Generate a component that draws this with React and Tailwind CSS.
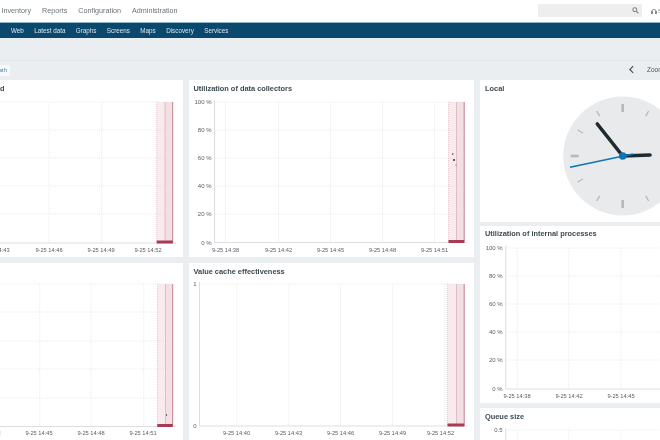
const sans = "font-['Liberation_Sans',Arial,sans-serif]";

function Chart({ w, h, axisX, top, bottom, vs, hs, xLabels, yLabels, band, dots = [], labelY = 156, axis = true }) {
  const end = band ? band[1] : w;
  return (
    <svg width={w} height={h} className="block" fontFamily="'Liberation Sans', Arial, sans-serif">
      {band && (
        <g>
          <rect x={band[0]} y={top} width={band[2] - band[0]} height={bottom - top} fill="#f9eaed" />
          <rect x={band[2]} y={top} width={band[1] - band[2]} height={bottom - top} fill="#f4dfe3" />
        </g>
      )}
      {hs.map((y) => (
        <line key={y} x1={axisX} x2={end} y1={y} y2={y} stroke="#dee1e3" strokeWidth="0.7" strokeDasharray="1 1" />
      ))}
      {vs.map((x) => (
        <line key={x} x1={x} x2={x} y1={top} y2={bottom} stroke="#dee1e3" strokeWidth="0.7" strokeDasharray="1 1" />
      ))}
      {axis && <line x1={axisX} x2={axisX} y1={top - 2} y2={bottom} stroke="#d3d6d9" strokeWidth="0.8" />}
      <line x1={axisX} x2={band ? band[1] + 3 : w} y1={bottom} y2={bottom} stroke="#d3d6d9" strokeWidth="0.8" />
      {band && (
        <g>
          <line x1={band[0]} x2={band[0]} y1={top} y2={bottom} stroke="#d9b6bd" strokeWidth="0.7" strokeDasharray="1 1" />
          <line x1={band[2]} x2={band[2]} y1={top} y2={bottom} stroke="#d8b4bc" strokeWidth="0.8" />
          <line x1={band[1]} x2={band[1]} y1={top} y2={bottom} stroke="#c2808d" strokeWidth="1" />
          <rect x={band[0]} y={bottom - 2.5} width={band[1] - band[0]} height={3} fill="#a83a52" />
        </g>
      )}
      {dots.map(([x, y, r], i) => (
        <circle key={i} cx={x} cy={y} r={r} fill="#3a2a2e" />
      ))}
      {yLabels.map(([t, y]) => (
        <text key={t} x={axisX - 3} y={y + 2} textAnchor="end" fontSize="6" fill="#5a6166">{t}</text>
      ))}
      {xLabels.map(([t, x]) => (
        <text key={t} x={x} y={labelY} textAnchor="middle" fontSize="5.7" fill="#5a6166">{t}</text>
      ))}
    </svg>
  );
}

function Clock() {
  const cx = 142.7, cy = 76;
  const ticks = [];
  for (let i = 0; i < 12; i++) {
    const a = (i * 30 * Math.PI) / 180;
    const major = i % 3 === 0;
    const r1 = major ? 44 : 46;
    const r2 = 52;
    ticks.push(
      <line key={i} x1={cx + Math.sin(a) * r1} y1={cy - Math.cos(a) * r1} x2={cx + Math.sin(a) * r2} y2={cy - Math.cos(a) * r2}
        stroke="#b4b9bc" strokeWidth={major ? 2.6 : 1.3} />
    );
  }
  return (
    <svg width="180" height="142" className="block">
      <circle cx={cx} cy={cy} r="59.5" fill="#e9eaeb" />
      {ticks}
      <line x1={cx} y1={cy} x2="117.3" y2="44" stroke="#1f2a30" strokeWidth="3.6" strokeLinecap="round" />
      <line x1={cx} y1={cy} x2="170" y2="75" stroke="#1f2a30" strokeWidth="3.6" strokeLinecap="round" />
      <line x1="90" y1="87.3" x2="153" y2="74" stroke="#0f74b5" strokeWidth="1.6" />
      <circle cx={cx} cy={cy} r="3.8" fill="#0f74b5" />
    </svg>
  );
}

function Card({ title, height, children, className = "", titleClass = "pl-[5px]" }) {
  return (
    <div className={`bg-white overflow-hidden shrink-0 ${className}`} style={{ height }}>
      <div className={`h-[16px] pt-[3.5px] text-[7.4px] leading-[10px] font-bold text-[#3b4a52] whitespace-nowrap ${titleClass}`}>{title}</div>
      {children}
    </div>
  );
}

const pct = (t) => [["100 %", t], ["80 %", t + 28], ["60 %", t + 56], ["40 %", t + 84], ["20 %", t + 112], ["0 %", t + 141]];

export default function App() {
  return (
    <div className={`w-[660px] h-[440px] overflow-hidden bg-[#ebeef0] blur-[0.35px] ${sans}`}>
      <header className="h-[23px] bg-white flex items-center border-b border-[#8fb6c8]">
        <nav className="flex gap-[11px] pl-[1.5px] text-[7.2px] text-[#6b7478] flex-1">
          <span>Inventory</span><span>Reports</span><span>Configuration</span><span>Administration</span>
        </nav>
        <div className="w-[104px] h-[13px] bg-[#eeeeee] flex items-center justify-end pr-[3px] mb-[1px]">
          <svg width="7" height="7" viewBox="0 0 10 10" fill="none" stroke="#7d8589" strokeWidth="1.5">
            <circle cx="4" cy="4" r="2.8" /><line x1="6" y1="6" x2="9.2" y2="9.2" />
          </svg>
        </div>
        <div className="w-[18px] pl-[9px] flex items-center gap-[1px] shrink-0 text-[6px] text-[#7d8589]">
          <svg width="6" height="7" viewBox="0 0 10 10" fill="none" stroke="#5f6a70" strokeWidth="1.2" className="shrink-0">
            <path d="M1.5 7V5a3.5 3.5 0 0 1 7 0v2" /><rect x="0.8" y="5.5" width="1.6" height="3" fill="#5f6a70" /><rect x="7.6" y="5.5" width="1.6" height="3" fill="#5f6a70" />
          </svg>
          <span>S</span>
        </div>
      </header>
      <div className="h-[15px] bg-[#0b486d] flex items-center gap-[10.4px] pl-[11px] text-[6.3px] text-[#d7e5ee]">
        <span>Web</span><span>Latest data</span><span>Graphs</span><span>Screens</span><span>Maps</span><span>Discovery</span><span>Services</span>
      </div>
      <div className="h-[23px] border-b border-[#e5e8ea]" />
      <div className="h-[19px] flex items-start justify-between">
        <div className="mt-[4px] h-[11px] w-[10px] pr-[3px] rounded-r-[1px] bg-[#f7f9fa] text-[6px] leading-[11px] text-[#3f8ab4] flex justify-end overflow-hidden">ath</div>
        <div className="flex items-center mt-[4px]">
          <svg width="5" height="9" viewBox="0 0 6 10" fill="none" stroke="#4c565b" strokeWidth="1.5" className="mr-[13.5px]"><path d="M5 1 1 5l4 4" /></svg>
          <span className="text-[6.5px] text-[#4c565b] w-[13px] overflow-hidden">Zoom</span>
        </div>
      </div>
      <div className="flex">
        <div className="w-[183px] shrink-0 flex flex-col gap-[6px]">
          <Card title="d" height={177} titleClass="pl-0">
            <Chart w={183} h={161} axisX={-5} top={6} bottom={147} axis={false}
              vs={[49, 101.7]} hs={[6, 34, 62, 90, 118]} band={[156.7, 172.7, 165]}
              yLabels={[]} xLabels={[["9-25 14:43", -4], ["9-25 14:46", 49], ["9-25 14:49", 101], ["9-25 14:52", 148]]} />
          </Card>
          <Card title="" height={177}>
            <Chart w={183} h={161} axisX={-5} top={5} bottom={147.5} axis={false}
              vs={[39.7, 91, 143.7]} hs={[5, 33, 62, 90, 119]} band={[157.3, 172.7, 165.5]}
              dots={[[166.5, 136, 0.7]]} yLabels={[]}
              xLabels={[["9-25 14:42", -13], ["9-25 14:45", 39], ["9-25 14:48", 91], ["9-25 14:51", 143]]} />
          </Card>
        </div>
        <div className="w-[285.5px] ml-[5.5px] shrink-0 flex flex-col gap-[6px]">
          <Card title="Utilization of data collectors" height={177}>
            <Chart w={285.5} h={161} axisX={25.5} top={6} bottom={146.5} vs={[36.5, 89.5, 141.5, 193.5, 245.5]}
              hs={[6, 34, 62, 90, 118]} band={[259.5, 275.2, 267.5]} yLabels={pct(5.5)}
              dots={[[263.8, 58, 0.8], [265, 64, 1], [267, 69, 0.5]]}
              xLabels={[["9-25 14:38", 36.5], ["9-25 14:42", 89.5], ["9-25 14:45", 141.5], ["9-25 14:48", 193.5], ["9-25 14:51", 245.5]]} />
          </Card>
          <Card title="Value cache effectiveness" height={177}>
            <Chart w={285.5} h={161} axisX={10.5} top={5} bottom={147} vs={[47.8, 99.8, 151.5, 203.5, 255.2]} hs={[5]}
              band={[258.5, 275.2, 267.5]} yLabels={[["1", 5], ["0", 147]]}
              xLabels={[["9-25 14:40", 47.5], ["9-25 14:43", 99.5], ["9-25 14:46", 151.5], ["9-25 14:49", 203.5], ["9-25 14:52", 251.5]]} />
          </Card>
        </div>
        <div className="w-[180px] ml-[6px] shrink-0 flex flex-col">
          <Card title="Local" height={142}>
            <div className="-mt-[16px]"><Clock /></div>
          </Card>
          <Card title="Utilization of internal processes" height={177} className="mt-[3.5px]">
            <Chart w={180} h={161} axisX={25.7} top={6} bottom={147} vs={[37.3, 88.7, 141]}
              hs={[6, 34, 62, 90, 118]} yLabels={pct(6)}
              xLabels={[["9-25 14:38", 37], ["9-25 14:42", 89], ["9-25 14:45", 141]]} />
          </Card>
          <Card title="Queue size" height={40} className="mt-[5.5px]">
            <Chart w={180} h={24} axisX={25.7} top={6} bottom={60} vs={[37.3, 88.7, 141]}
              hs={[6]} yLabels={[["0.5", 6]]} xLabels={[]} />
          </Card>
        </div>
      </div>
    </div>
  );
}
